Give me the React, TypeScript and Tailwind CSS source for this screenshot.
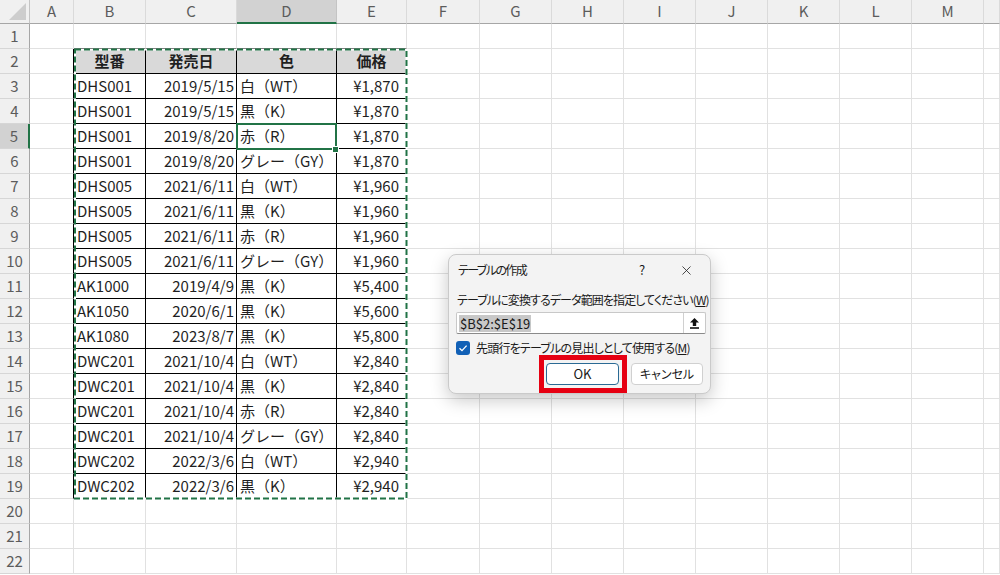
import { X } from "lucide-react";

const COLS = ["A", "B", "C", "D", "E", "F", "G", "H", "I", "J", "K", "L", "M", ""];

const DATA: string[][] = [
  ["型番", "発売日", "色", "価格"],
  ["DHS001", "2019/5/15", "白（WT）", "¥1,870"],
  ["DHS001", "2019/5/15", "黒（K）", "¥1,870"],
  ["DHS001", "2019/8/20", "赤（R）", "¥1,870"],
  ["DHS001", "2019/8/20", "グレー（GY）", "¥1,870"],
  ["DHS005", "2021/6/11", "白（WT）", "¥1,960"],
  ["DHS005", "2021/6/11", "黒（K）", "¥1,960"],
  ["DHS005", "2021/6/11", "赤（R）", "¥1,960"],
  ["DHS005", "2021/6/11", "グレー（GY）", "¥1,960"],
  ["AK1000", "2019/4/9", "黒（K）", "¥5,400"],
  ["AK1050", "2020/6/1", "黒（K）", "¥5,600"],
  ["AK1080", "2023/8/7", "黒（K）", "¥5,800"],
  ["DWC201", "2021/10/4", "白（WT）", "¥2,840"],
  ["DWC201", "2021/10/4", "黒（K）", "¥2,840"],
  ["DWC201", "2021/10/4", "赤（R）", "¥2,840"],
  ["DWC201", "2021/10/4", "グレー（GY）", "¥2,840"],
  ["DWC202", "2022/3/6", "白（WT）", "¥2,940"],
  ["DWC202", "2022/3/6", "黒（K）", "¥2,940"],
];

const ROWS = Array.from({ length: 22 }, (_, i) => i + 1);

function Cell({ row, col }: { row: number; col: number }) {
  // table occupies B2:E19
  const inTable = row >= 2 && row <= 19 && col >= 1 && col <= 4;
  const text = inTable ? DATA[row - 2][col - 1] : "";
  const isHead = row === 2 && inTable;

  const rightBlack = inTable || (col === 0 && row >= 2 && row <= 19);
  const bottomBlack = inTable || (row === 1 && col >= 1 && col <= 4);

  let align = "justify-start pl-[3px]";
  if (isHead) align = "justify-center font-bold";
  else if (col === 2) align = "justify-end pr-[2px]";
  else if (col === 4) align = "justify-end pr-[7px]";

  return (
    <div
      className={`flex items-center whitespace-nowrap overflow-hidden text-[15px] text-[#1f1f1f] border-r border-b ${
        rightBlack ? "border-r-black" : "border-r-[#e1e1e1]"
      } ${bottomBlack ? "border-b-black" : "border-b-[#e1e1e1]"} ${
        isHead ? "bg-[#d9d9d9]" : "bg-white"
      } ${align}`}
    >
      {text}
    </div>
  );
}

export default function App() {
  return (
    <div className="relative w-[1000px] h-[575px] overflow-hidden bg-white font-['Noto_Sans_CJK_JP','Noto_Sans',sans-serif]">
      {/* Sheet grid */}
      <div className="grid grid-cols-[30px_44px_72px_91px_100px_70px_73px_72px_72px_72px_72px_72px_72px_72px_1fr] grid-rows-[24px_repeat(22,25px)]">
        {/* corner */}
        <div className="relative bg-[#f0f0f0] border-r border-b border-r-[#c4c4c4] border-b-[#a6a6a6]">
          <svg className="absolute right-[3px] bottom-[3px]" width="17" height="17" viewBox="0 0 17 17">
            <polygon points="17,0 17,17 0,17" fill="#cdcdcd" />
          </svg>
        </div>
        {COLS.map((c, i) => (
          <div
            key={`h${i}`}
            className={`flex items-center justify-center text-[15px] text-[#5c5c5c] ${
              i === 3
                ? "bg-[#d2d2d2] border-b-2 border-b-[#217346] border-r border-r-[#c4c4c4]"
                : "bg-[#f0f0f0] border-b border-b-[#a6a6a6] border-r border-r-[#dadada]"
            }`}
          >
            {c}
          </div>
        ))}
        {ROWS.map((r) => (
          <div key={`r${r}`} className="contents">
            <div
              className={`flex items-center justify-center text-[15px] text-[#5c5c5c] border-b border-b-[#d6d6d6] ${
                r === 5
                  ? "bg-[#d2d2d2] border-r-2 border-r-[#217346]"
                  : "bg-[#f0f0f0] border-r border-r-[#a6a6a6]"
              }`}
            >
              {r}
            </div>
            {COLS.map((_, ci) => (
              <Cell key={ci} row={r} col={ci} />
            ))}
          </div>
        ))}
      </div>

      {/* copy marquee around B2:E19 */}
      <svg className="absolute left-0 top-0 pointer-events-none" width="1000" height="575">
        <rect x="75" y="49.5" width="331.5" height="449" fill="none" stroke="#ffffff" strokeWidth="2" />
        <rect x="75" y="49.5" width="331.5" height="449" fill="none" stroke="#217346" strokeWidth="2" strokeDasharray="6 3" />
      </svg>

      {/* active cell D5 */}
      <div className="absolute left-[236px] top-[123px] w-[101px] h-[27px] border-2 border-[#217346] pointer-events-none" />
      <div className="absolute left-[332px] top-[146px] w-[7px] h-[7px] bg-[#217346] border border-white" />

      {/* Create Table dialog */}
      <div className="absolute left-[448px] top-[254px] w-[263px] h-[140px] rounded-[8px] bg-[#f3f3f3] border border-[#cacaca] shadow-[0_6px_18px_rgba(0,0,0,0.22)] text-[12px] text-[#1a1a1a] [font-feature-settings:'palt']">
        <div className="flex items-center h-[30px] pl-[9px]">
          <span className="tracking-[-1.6px]">テーブルの作成</span>
          <span className="ml-auto w-[20px] text-center text-[13px]">?</span>
          <span className="ml-[19px] mr-[9px] w-[30px] flex justify-center">
            <X className="w-[15px] h-[15px] text-[#222]" strokeWidth={1.3} />
          </span>
        </div>
        <div className="mt-[6px] h-[18px] leading-[18px] pl-[8px] whitespace-nowrap tracking-[-0.9px]">
          テーブルに変換するデータ範囲を指定してください(<span className="underline">W</span>)
        </div>
        <div className="mt-[3px] ml-[7px] mr-[4px] h-[22px] flex bg-white border border-[#c8c8c8] border-b-[#8a8a8a] rounded-[2px]">
          <div className="flex-1 flex items-center pl-[2px]">
            <span className="bg-[#c8c8c8] text-[13px] leading-[17px] px-[1px]">$B$2:$E$19</span>
          </div>
          <div className="w-[22px] flex items-center justify-center border-l border-[#d0d0d0]">
            <svg width="11" height="12" viewBox="0 0 11 12">
              <path d="M5.5 1 L1 5.5 L3.8 5.5 L3.8 9 L7.2 9 L7.2 5.5 L10 5.5 Z" fill="#111" />
              <rect x="1" y="10.2" width="9" height="1.6" fill="#111" />
            </svg>
          </div>
        </div>
        <div className="mt-[7px] ml-[7px] flex items-center h-[14px]">
          <div className="w-[14px] h-[14px] rounded-[3px] bg-[#1160b6] flex items-center justify-center">
            <svg width="10" height="10" viewBox="0 0 10 10">
              <path d="M1.5 5.2 L4 7.6 L8.6 2.6" fill="none" stroke="#fff" strokeWidth="1.3" />
            </svg>
          </div>
          <span className="ml-[6px] whitespace-nowrap tracking-[-0.8px]">
            先頭行をテーブルの見出しとして使用する(<span className="underline">M</span>)
          </span>
        </div>
        <div className="mt-[8px] flex justify-end pr-[7px] gap-[12px]">
          <div className="relative">
            <button className="w-[73px] h-[22px] rounded-[4px] bg-white border border-[#2a6a94] text-[13px] flex items-center justify-center">
              OK
            </button>
            <span className="absolute -left-[7px] -right-[8px] -top-[8px] -bottom-[8px] border-[5px] border-[#e60012] pointer-events-none" />
          </div>
          <button className="w-[72px] h-[22px] rounded-[4px] bg-white border border-[#d0d0d0] text-[12px] flex items-center justify-center">
            キャンセル
          </button>
        </div>
      </div>
    </div>
  );
}
